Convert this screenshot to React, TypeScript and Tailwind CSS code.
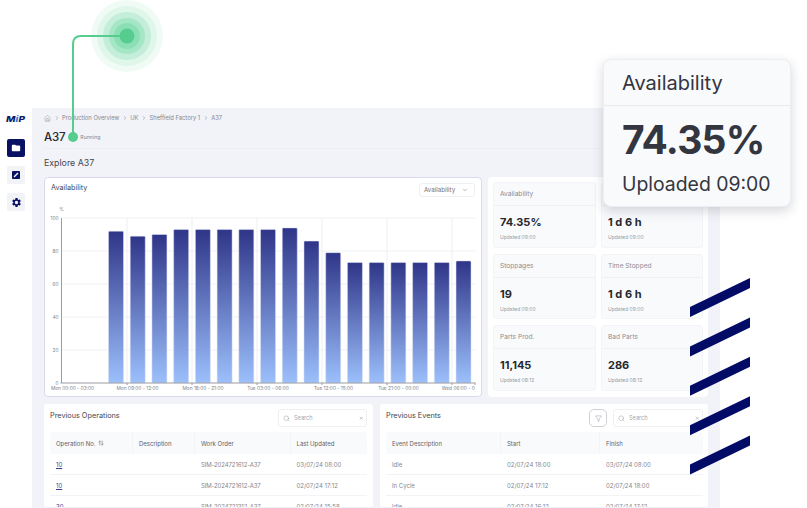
import React from "react";
import { Home, ChevronRight, ChevronDown, Search, X, Filter, ArrowUpDown } from "lucide-react";
import { MdFolder, MdSettings } from "react-icons/md";

const font = { fontFamily: "Inter, 'Liberation Sans', sans-serif" };
const bars = [92, 89, 90, 93, 93, 93, 93, 93, 94, 86, 79, 73, 73, 73, 73, 73, 74];
const stats = [
  ["Availability", "74.35%", "Updated 09:00"],
  ["", "1 d 6 h", "Updated 09:00"],
  ["Stoppages", "19", "Updated 09:00"],
  ["Time Stopped", "1 d 6 h", "Updated 09:00"],
  ["Parts Prod.", "11,145", "Updated 08:12"],
  ["Bad Parts", "286", "Updated 08:12"],
];
const opRows = [
  ["10", "", "SIM-2024721612-A37", "03/07/24 08:00"],
  ["10", "", "SIM-2024721612-A37", "02/07/24 17:12"],
  ["30", "", "SIM-2024721312-A37", "02/07/24 15:58"],
];
const evRows = [
  ["Idle", "02/07/24 18:00", "03/07/24 08:00"],
  ["In Cycle", "02/07/24 17:12", "02/07/24 18:00"],
  ["Idle", "02/07/24 16:12", "02/07/24 17:12"],
];

function Chart() {
  const x0 = 16.5, w = 414, top = 40, h = 165;
  const yOf = (v: number) => top + h - (h * v) / 100;
  return (
    <svg width="436" height="218" className="block" style={font}>
      <defs>
        <linearGradient id="barFill" x1="0" y1="0" x2="0" y2="1">
          <stop offset="0" stopColor="#2f3588" />
          <stop offset="1" stopColor="#9cc0fc" />
        </linearGradient>
        <clipPath id="plotClip">
          <rect x="0" y="0" width="430" height="218" />
        </clipPath>
      </defs>
      {[100, 80, 60, 40, 20].map((v) => (
        <line key={v} x1={x0} x2={x0 + w} y1={yOf(v)} y2={yOf(v)} stroke="#f0f1f5" />
      ))}
      {[82, 147, 212, 277, 342, 407].map((x) => (
        <line key={x} x1={x} x2={x} y1={top} y2={top + h} stroke="#eeeff3" />
      ))}
      {bars.map((b, i) => (
        <rect key={i} x={63.5 + i * 21.72} y={yOf(b)} width={15} height={(h * b) / 100} rx={1} fill="url(#barFill)" stroke="#dfe3f5" strokeWidth={0.5} />
      ))}
      <line x1={x0} x2={x0} y1={top} y2={top + h} stroke="#9a9ca3" />
      <line x1={x0 - 1} x2={x0 + w} y1={top + h} y2={top + h} stroke="#9a9ca3" />
      {[100, 80, 60, 40, 20, 0].map((v) => (
        <text key={v} x={x0 - 3} y={yOf(v) + 1.8} textAnchor="end" fontSize="4.8" fill="#7d7f87">{v}</text>
      ))}
      <text x={x0} y={33} textAnchor="middle" fontSize="4.8" fill="#7d7f87">%</text>
      {[82, 147, 212, 277, 342, 407, 430].map((x) => (
        <line key={x} x1={x} x2={x} y1={top + h} y2={top + h + 2} stroke="#9a9ca3" />
      ))}
      <g clipPath="url(#plotClip)">
        {[
          ["Mon 00:00 - 03:00", 27.5],
          ["Mon 09:00 - 12:00", 92.5],
          ["Mon 18:00 - 21:00", 158],
          ["Tue 03:00 - 06:00", 223],
          ["Tue 12:00 - 15:00", 288.5],
          ["Tue 21:00 - 00:00", 353.5],
          ["Wed 06:00 - 09:00", 418.5],
        ].map(([t, x]) => (
          <text key={t as string} x={x as number} y={212} textAnchor="middle" fontSize="4.8" fill="#7d7f87">{t}</text>
        ))}
      </g>
    </svg>
  );
}

function StatCard({ label, value, note }: { label: string; value: string; note: string }) {
  return (
    <div className="h-[65.5px] rounded-[3px] bg-[#f9fafc] border border-[#f3f4f7]">
      <div className="h-[23px] border-b border-[#f0f1f5] pl-[6px] pt-[2px] flex items-center text-[6.6px] text-[#8b8d94]">{label}</div>
      <div className="pl-[6px] pt-[9px] text-[11px] leading-[14px] font-bold text-[#26282e]">{value}</div>
      <div className="pl-[6px] pt-[5px] text-[5px] leading-[6px] text-[#9a9ca3]">{note}</div>
    </div>
  );
}

function SearchBox({ className }: { className: string }) {
  return (
    <div className={"h-[18px] bg-white border border-[#eff0f3] rounded-[3px] flex items-center pl-[4px] pr-[3px] " + className}>
      <Search size={7} strokeWidth={1.4} className="text-[#8b8d94]" />
      <span className="ml-[4px] text-[5.6px] text-[#a5a7ae]">Search</span>
      <X size={4.5} strokeWidth={2} className="ml-auto text-[#6f7178]" />
    </div>
  );
}

function App() {
  return (
    <div className="relative w-[807px] h-[508px] overflow-hidden bg-white pt-[108px] flex" style={font}>
      <aside className="w-[32px] flex flex-col items-center">
        <div className="h-[21px] flex items-center justify-center text-[8px] leading-none font-extrabold italic text-[#0a1a6b] scale-x-125">
          M<span className="text-[#3f6fd8]">i</span>P
        </div>
        <div className="mt-[10px] w-[18px] h-[18px] rounded-[2px] bg-[#0a1164] flex items-center justify-center">
          <MdFolder size={10} className="text-white" />
        </div>
        <div className="mt-[9px] w-[18px] h-[18px] rounded-[2px] bg-[#f2f3f7] flex items-center justify-center">
          <svg width="8" height="8" viewBox="0 0 8 8">
            <rect width="8" height="8" rx="0.8" fill="#0a1164" />
            <path d="M2 6 L6 2" stroke="#fff" strokeWidth="1.3" />
          </svg>
        </div>
        <div className="mt-[9px] w-[18px] h-[18px] rounded-[2px] bg-[#f2f3f7] flex items-center justify-center">
          <MdSettings size={11} className="text-[#0a1164]" />
        </div>
      </aside>

      <main className="w-[688px] h-[400px] bg-[#f2f3f8] px-[12px]">
        <div className="h-[41px] border-b border-[#eceef2]">
          <div className="h-[20px] flex items-center gap-[2.5px] text-[5.8px] text-[#85878e]">
            <Home size={7} strokeWidth={1.4} />
            <ChevronRight size={6} />
            <span>Production Overview</span>
            <ChevronRight size={6} />
            <span>UK</span>
            <ChevronRight size={6} />
            <span>Sheffield Factory 1</span>
            <ChevronRight size={6} />
            <span>A37</span>
          </div>
          <div className="flex items-center h-[19px]">
            <span className="text-[11.5px] font-medium tracking-[-0.2px] text-[#26282e]">A37</span>
            <span className="ml-[15px] text-[5.2px] text-[#85878e]">Running</span>
          </div>
        </div>
        <div className="h-[28px] flex items-center text-[8.8px] text-[#45474e]">Explore A37</div>

        <div className="flex gap-[6px] h-[220px]">
          <section className="relative w-[438px] rounded-[4px] bg-white border border-[#d9dbec] overflow-hidden">
            <div className="absolute left-[6px] top-[5px] text-[7.2px] text-[#45474e]">Availability</div>
            <div className="absolute right-[6px] top-[5px] w-[56px] h-[14px] border border-[#eff0f3] rounded-[3px] flex items-center justify-between px-[4px] text-[6.2px] text-[#6f7178]">
              Availability
              <ChevronDown size={6} className="mr-[2px]" />
            </div>
            <Chart />
          </section>
          <section className="w-[220px] rounded-[4px] bg-white px-[5px] pt-[5px]">
            <div className="grid grid-cols-[103px_102px] gap-x-[5px] gap-y-[6px]">
              {stats.map(([l, v, n], i) => (
                <StatCard key={i} label={l} value={v} note={n} />
              ))}
            </div>
          </section>
        </div>

        <div className="mt-[7px] flex gap-[7px] h-[103px]">
          <section className="w-[329px] bg-white rounded-[3px] px-[6px] overflow-hidden">
            <div className="h-[28px] flex justify-between pt-[5px]">
              <span className="pt-[2px] text-[7.3px] leading-[10px] text-[#45474e]">Previous Operations</span>
              <SearchBox className="w-[89px]" />
            </div>
            <div className="grid grid-cols-[83px_62px_95.5px_76.5px] h-[22px] bg-[#f9fafc] rounded-t-[3px] items-center text-[6px] text-[#5f6168]">
              <span className="pl-[6px] h-full flex items-center gap-[3px] border-r border-[#f3f4f7]">Operation No. <ArrowUpDown size={6} /></span>
              <span className="pl-[6px] h-full flex items-center border-r border-[#f3f4f7]">Description</span>
              <span className="pl-[6px] h-full flex items-center border-r border-[#f3f4f7]">Work Order</span>
              <span className="pl-[6px]">Last Updated</span>
            </div>
            {opRows.map((r, i) => (
              <div key={i} className="grid grid-cols-[83px_62px_95.5px_76.5px] h-[21px] border-b border-[#f2f3f6] items-center text-[6px] text-[#85878e]">
                <span className="pl-[6px] underline text-[#3b3f94]">{r[0]}</span>
                <span />
                <span className="pl-[6px] tracking-[-0.1px]">{r[2]}</span>
                <span className="pl-[6px]">{r[3]}</span>
              </div>
            ))}
          </section>
          <section className="w-[328px] bg-white rounded-[3px] pl-[6px] pr-[5px] overflow-hidden">
            <div className="h-[28px] flex pt-[5px]">
              <span className="pt-[2px] text-[7.3px] leading-[10px] text-[#45474e]">Previous Events</span>
              <div className="ml-auto w-[18px] h-[18px] border border-[#cfd1d6] rounded-[5px] flex items-center justify-center">
                <Filter size={7} strokeWidth={1.2} className="text-[#6f7178]" />
              </div>
              <SearchBox className="ml-[6px] w-[90px]" />
            </div>
            <div className="grid grid-cols-[115px_99px_103px] h-[22px] bg-[#f9fafc] rounded-t-[3px] items-center text-[6px] text-[#5f6168]">
              <span className="pl-[6px] h-full flex items-center border-r border-[#f3f4f7]">Event Description</span>
              <span className="pl-[6px] h-full flex items-center border-r border-[#f3f4f7]">Start</span>
              <span className="pl-[6px]">Finish</span>
            </div>
            {evRows.map((r, i) => (
              <div key={i} className="grid grid-cols-[115px_99px_103px] h-[21px] border-b border-[#f2f3f6] items-center text-[6px] text-[#85878e]">
                <span className="pl-[6px]">{r[0]}</span>
                <span className="pl-[6px]">{r[1]}</span>
                <span className="pl-[6px]">{r[2]}</span>
              </div>
            ))}
          </section>
        </div>
      </main>

      <svg width="807" height="508" className="absolute left-0 top-0 pointer-events-none">
        <circle cx="127" cy="36" r="36" fill="#f1fbf6" />
        <circle cx="127" cy="36" r="30" fill="#dff6ea" />
        <circle cx="127" cy="36" r="24" fill="#c4eed9" />
        <circle cx="127" cy="36" r="18" fill="#a5e6c6" />
        <circle cx="127" cy="36" r="13" fill="#8bdfb5" />
        <circle cx="127" cy="36" r="7.5" fill="#56cc8e" />
        <path d="M127 36 H81 Q73 36 73 44 V137" fill="none" stroke="#56cc8e" strokeWidth="2" />
        <circle cx="73" cy="137" r="5" fill="#56cc8e" />
        {[0, 39.4, 78.8, 118.2, 157.6].map((d) => (
          <polygon key={d} points={`690,${307 + d} 750,${278 + d} 750,${288 + d} 690,${317 + d}`} fill="#020b66" />
        ))}
      </svg>

      <div className="absolute left-[603px] top-[59px] w-[188px] h-[148px] rounded-[8px] bg-[#f9fafc] border border-[#eceef2] shadow-[0_4px_12px_rgba(30,35,60,0.18)] text-[#33363f]">
        <div className="h-[46px] border-b border-[#e9ebef] pl-[18px] pt-[1px] flex items-center text-[20px]">Availability</div>
        <div className="pl-[18px] pt-[12px] text-[39px] leading-[44px] font-bold tracking-[-0.8px]">74.35%</div>
        <div className="pl-[18px] pt-[8px] text-[19.4px] leading-[28px]">Uploaded 09:00</div>
      </div>
    </div>
  );
}

export default App;
